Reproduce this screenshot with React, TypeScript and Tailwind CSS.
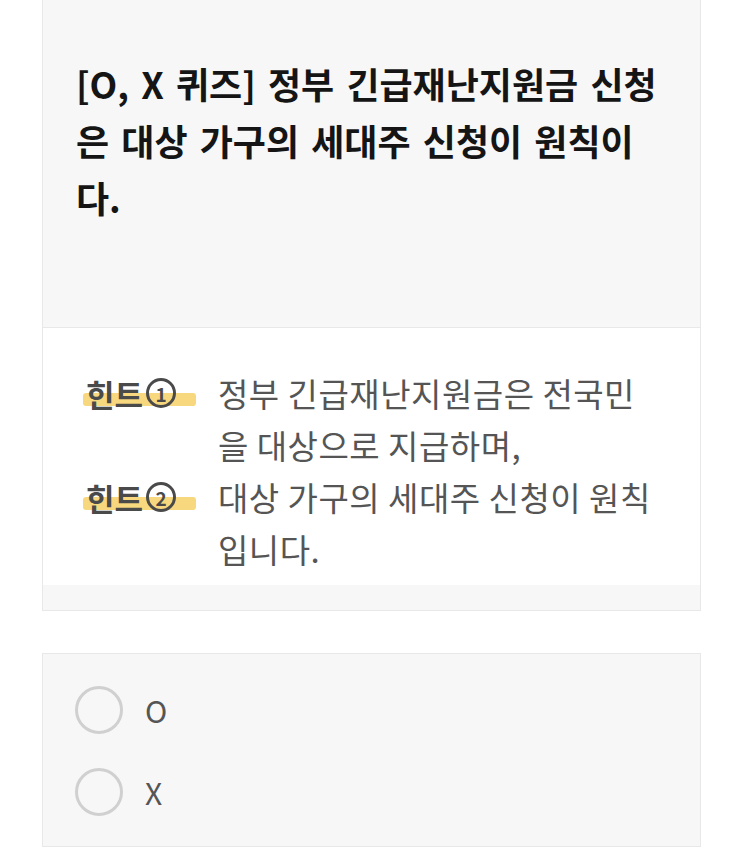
import { useState } from "react";

const font = { fontFamily: '"Noto Sans CJK KR", "Noto Sans", sans-serif' };

type Hint = { num: string; text: string };

const hints: Hint[] = [
  { num: "1", text: "정부 긴급재난지원금은 전국민을 대상으로 지급하며," },
  { num: "2", text: "대상 가구의 세대주 신청이 원칙입니다." },
];

const options = ["O", "X"];

export default function App() {
  const [picked, setPicked] = useState<string | null>(null);

  return (
    <div className="min-h-[859px] w-[743px] bg-white" style={font}>
      {/* question card */}
      <div className="mx-[42px] border border-t-0 border-[#e8e8e8]">
        <div className="h-[327px] bg-[#f7f7f7] pl-[33px] pr-[42px] pt-[55px]">
          <h1 className="text-[36px] font-bold leading-[57px] tracking-normal text-[#151515] [word-spacing:4px]">
            [O, X 퀴즈] 정부 긴급재난지원금 신청은 대상 가구의 세대주 신청이 원칙이다.
          </h1>
        </div>

        <div className="border-t border-[#e8e8e8] bg-white pl-[40px] pr-[48px] pt-[39px] pb-[10px]">
          {hints.map((h) => (
            <div key={h.num} className="flex">
              <div className="w-[135px] shrink-0">
                <span className="relative flex h-[52px] items-center pl-[3px] text-[31px] font-bold leading-none text-[#4a4a4a]">
                  <span className="absolute left-0 top-[26px] h-[13px] w-[113px] rounded-[3px] bg-[#f8d87e]" />
                  <span className="relative">힌트</span>
                  <span className="relative ml-[3px] inline-flex h-[30px] w-[30px] items-center justify-center rounded-full border-[3px] border-[#4a4a4a] text-[19px] leading-none">
                    {h.num}
                  </span>
                </span>
              </div>
              <p className="text-[33px] leading-[52px] tracking-[0.5px] text-[#555]">{h.text}</p>
            </div>
          ))}
        </div>
        <div className="h-[25px] bg-[#f7f7f7]" />
      </div>

      {/* answers card */}
      <div className="mx-[42px] mt-[42px] flex h-[194px] flex-col gap-[34px] border border-[#e8e8e8] bg-[#f7f7f7] pl-[32px] pt-[32px]">
        {options.map((o) => (
          <button
            key={o}
            type="button"
            onClick={() => setPicked(o)}
            className="flex items-center gap-[22px] text-left"
          >
            <span
              className={
                picked === o
                  ? "h-[48px] w-[48px] rounded-full border-[3px] border-[#999] bg-[#999]"
                  : "h-[48px] w-[48px] rounded-full border-[3px] border-[#d0d0d0]"
              }
            />
            <span className="text-[30px] leading-none text-[#555]">{o}</span>
          </button>
        ))}
      </div>
    </div>
  );
}
